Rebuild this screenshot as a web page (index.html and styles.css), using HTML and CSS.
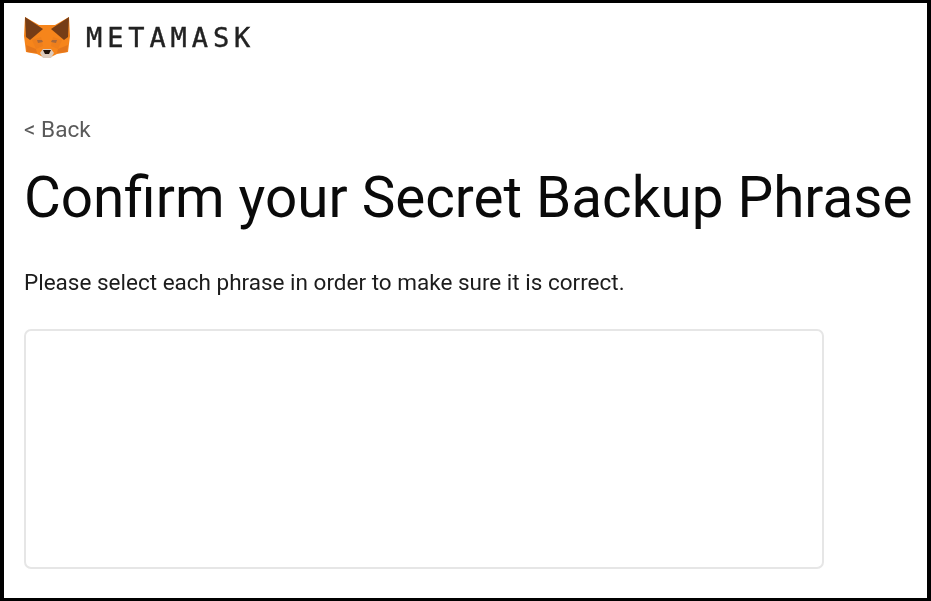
FILE: index.html
```html
<!DOCTYPE html>
<html lang="en">
<head>
  <meta charset="UTF-8" />
  <title>Confirm your Secret Backup Phrase</title>
  <link rel="stylesheet" href="styles.css">
</head>
<body>
  <div class="frame">
    <div class="logo-row">
      <svg class="fox" viewBox="0 0 46 42" width="46" height="42">
        <path fill="#f6851b" d="M1 1 L15 9 H31 L45 1 L46 20 L44 36 L33 38 L27 41 H19 L13 38 L2 36 L0 20 Z"/>
        <path fill="#763d16" d="M1 1 L19 13 L6 24 L2 21 Z"/>
        <path fill="#763d16" d="M45 1 L27 13 L40 24 L44 21 Z"/>
        <path fill="#ee7f1c" d="M8 24 L17 21 L19 30 L12 33 Z"/>
        <path fill="#ee7f1c" d="M38 24 L29 21 L27 30 L34 33 Z"/>
        <path fill="#e4761b" d="M2 29 L12 33 L13 37 L3 36 Z"/>
        <path fill="#e4761b" d="M44 29 L34 33 L33 37 L43 36 Z"/>
        <path fill="#a8683a" d="M13 24 H18 L19 26 L14 27 Z"/>
        <path fill="#a8683a" d="M33 24 H28 L27 26 L32 27 Z"/>
        <path fill="#dccbbd" d="M16 37 L19 33 H27 L30 37 L27 42 H19 Z"/>
        <path fill="#20130b" d="M19 34 H27 L25 38 H21 Z"/>
      </svg>
      <span class="wordmark">METAMASK</span>
    </div>
    <div class="back">&lt; Back</div>
    <h1 class="title">Confirm your Secret Backup Phrase</h1>
    <p class="hint">Please select each phrase in order to make sure it is correct.</p>
    <div class="phrase-box"></div>
  </div>
</body>
</html>
```
FILE: styles.css
```css
html, body {
  margin: 0;
  height: 100%;
  background: #fff;
}
.frame {
  box-sizing: border-box;
  width: 931px;
  height: 601px;
  border: solid #000;
  border-width: 3px 4px 3px 4px;
  padding: 13px 0 0 20px;
  font-family: Roboto, sans-serif;
  overflow: hidden;
}
.logo-row {
  display: flex;
  align-items: center;
  gap: 16px;
}
.fox {
  display: block;
  filter: blur(0.6px);
}
.wordmark {
  font-family: "DejaVu Sans Mono", monospace;
  font-size: 27px;
  letter-spacing: 4.9px;
  color: #222;
  -webkit-text-stroke: 0.4px #222;
  filter: blur(0.4px);
}
.back {
  margin-top: 58px;
  font-size: 22.6px;
  line-height: 28px;
  color: #5a5a5a;
  filter: blur(0.4px);
}
.title {
  margin: 22px 0 0;
  font-size: 56.6px;
  line-height: 64px;
  font-weight: 400;
  color: #0a0a0a;
  white-space: nowrap;
  filter: blur(0.4px);
}
.hint {
  margin: 38px 0 0;
  font-size: 22.5px;
  line-height: 28px;
  color: #1c1c1c;
  filter: blur(0.4px);
}
.phrase-box {
  box-sizing: border-box;
  width: 800px;
  height: 240px;
  margin-top: 33px;
  border: 2px solid #e6e6e6;
  border-radius: 7px;
}
```
